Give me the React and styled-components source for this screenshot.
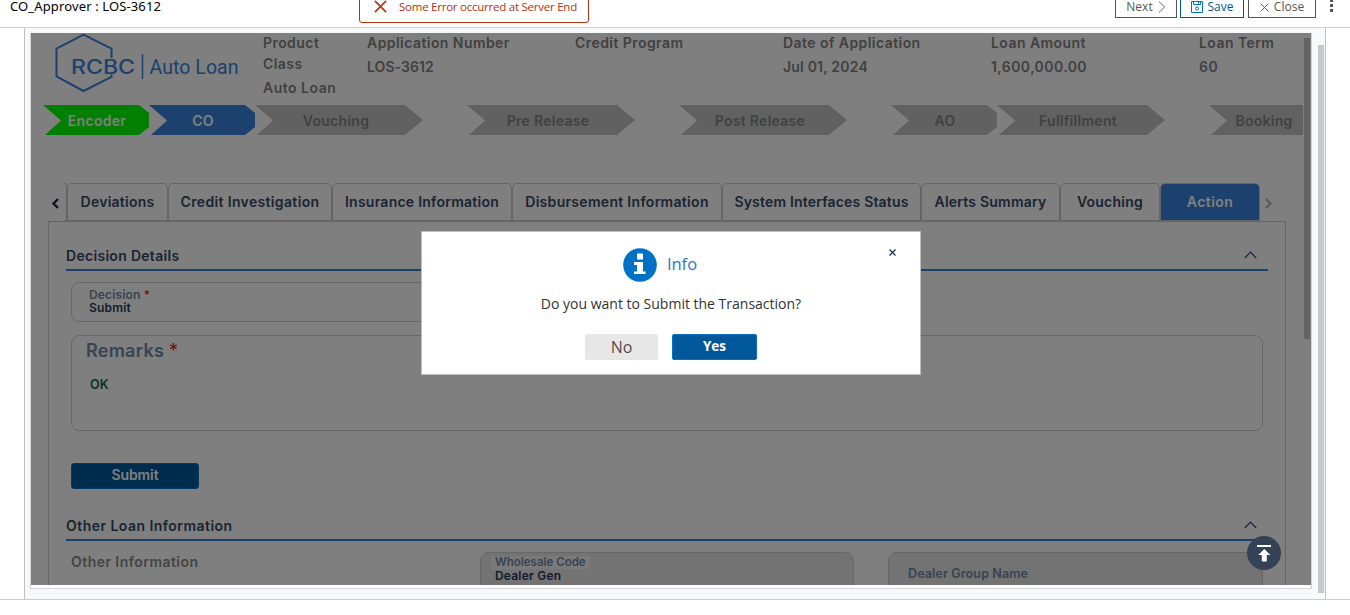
import React from "react";
import styled, { createGlobalStyle } from "styled-components";

const Global = createGlobalStyle`
  *, *::before, *::after { box-sizing: border-box; }
  body { margin: 0; background: #fff; overflow: hidden; font-family: "Open Sans", sans-serif; }
`;
const brand = `font-family: Inter, "Open Sans", sans-serif; font-weight: 600; white-space: nowrap;`;

const Page = styled.div`width: 1350px; height: 615px; overflow: hidden; background: #fff;`;

/* header */
const Header = styled.header`
  height: 28px; display: flex; align-items: flex-start; justify-content: space-between;
  border-bottom: 1px solid #ccced1; overflow: hidden; padding-left: 10px;
`;
const CaseTitle = styled.div`
  width: 349px; font: 13px/18px "Noto Sans", sans-serif; color: #000; margin-top: -3px; letter-spacing: 0.13px;
  white-space: nowrap;
`;
const ErrorToast = styled.div`
  width: 230px; height: 39px; margin-top: -16px; padding: 5px 0 0 14px; display: flex; align-items: center; gap: 12px;
  border: 1px solid #b5310f; border-radius: 3px; color: #b5310f; font-size: 11.5px; letter-spacing: -0.24px;
  white-space: nowrap;
  svg { flex: none; }
`;
const Actions = styled.div`
  margin-left: auto; margin-top: -8px; display: flex; align-items: flex-start;
`;
const HeaderButton = styled.button`
  height: 26px; width: ${(p) => p.$width}px; margin-right: ${(p) => p.$gap}px; padding: 4px 0 0;
  display: flex; align-items: center; justify-content: center; gap: 5px;
  border: 1px solid ${(p) => (p.$primary ? "#00589b" : "#555")}; background: #fff;
  color: ${(p) => (p.$primary ? "#00589b" : "#555")}; font: 12px/18px "Open Sans", sans-serif;
`;
const MoreIcon = styled.svg`margin: 8px 16px 0 0;`;

/* workspace */
const Workspace = styled.main`
  height: 572px; border-bottom: 1px solid #ccc; padding: 0 24px;
`;
const Canvas = styled.div`
  height: 571px; display: flex; background: #f8f9fb; border: solid #bfc0c2; border-width: 0 1px; padding: 5px 1px 0 5px;
`;
const Frame = styled.div`
  width: 1282px; height: 556px; border: 1px solid #d3d5d8; border-top: 0; background: #fff; flex: none;
`;
const OuterScroll = styled.div`width: 6px; height: 548px; margin: 12px 0 0 6px; background: #c8c8c8; flex: none;`;
const Viewport = styled.div`
  position: relative; width: 1280px; height: 552px; overflow: hidden; background: #fff; display: flex;
`;
const Content = styled.div`width: 1272px; flex: none; overflow: hidden;`;
const InnerScroll = styled.div`width: 6px; height: 301px; margin: 5px 0 0 1px; background: #c8c8c8;`;
const Dim = styled.div`position: absolute; inset: 0; background: rgba(0, 0, 0, 0.5);`;

const Summary = styled.section`height: 72px; display: flex;`;
const Logo = styled.svg`margin-left: 22px; flex: none;`;
const Fact = styled.dl`
  ${brand} width: ${(p) => p.$width}px; flex: none; margin: 0; font-size: 14px; line-height: 21px;
  color: #828282; letter-spacing: 0.44px;
  dt { white-space: pre; margin-top: -1px; } dd { margin: 3px 0 0; letter-spacing: ${(p) => p.$ls}px; }
`;

const Stages = styled.nav`display: flex; height: 30px; padding-left: 12px;`;
const clips = {
  wide: "polygon(0 0, 150px 0, 168px 15px, 150px 30px, 2px 30px, 18px 15.5px)",
  narrow: "polygon(0 0, 96px 0, 106px 8px, 106px 22px, 96px 30px, 2px 30px, 18px 15.5px)",
  cut: "polygon(0 0, 108px 0, 108px 30px, 2px 30px, 18px 15.5px)",
};
const Stage = styled.div`
  ${brand} flex: none; height: 30px; line-height: 32px; text-align: center; font-size: 14px;
  width: ${(p) => (p.$shape === "wide" ? 168 : p.$shape === "cut" ? 108 : 106)}px;
  margin-right: ${(p) => (p.$shape === "wide" ? 44 : 0)}px; padding-left: ${(p) => (p.$shape === "wide" ? 0 : 2)}px;
  padding-right: ${(p) => (p.$shape === "wide" ? 6 : 0)}px; letter-spacing: 0.28px;
  clip-path: ${(p) => clips[p.$shape]};
  background: ${(p) => p.$bg || "#c2c2c2"}; color: ${(p) => (p.$bg ? "#fff" : "#828282")};
`;

const TabBar = styled.div`display: flex; height: 38px; margin: 48px 0 0 17px;`;
const TabArrow = styled.svg`flex: none; margin-top: 15px;`;
const TabStub = styled.div`
  width: 3px; margin-left: 4px; border: 1px solid #cacaca; border-left: 0; border-radius: 0 5px 0 0; flex: none;
`;
const Tab = styled.button`
  ${brand} flex: none; height: 38px; width: ${(p) => p.$width}px; padding: 0; font-size: 14px; line-height: 36px;
  letter-spacing: ${(p) => p.$ls || 0}px;
  border: 1px solid #cacaca; border-radius: 5px 5px 0 0;
  background: ${(p) => (p.$active ? "#3983dc" : "#fff")}; color: ${(p) => (p.$active ? "#fff" : "#364864")};
`;
const Panel = styled.section`
  width: 1238px; height: 400px; margin-left: 17px; border: 1px solid #cacaca; padding: 23px 17px 0;
`;
const SectionHead = styled.div`
  ${brand} height: 26px; width: 1202px; border-bottom: 2px solid #3b80d6; display: flex; justify-content: space-between;
  align-items: flex-start; font-size: 14px; line-height: 21px; color: #364864; letter-spacing: ${(p) => p.$ls}px;
  padding-right: 11px;
  svg { margin-top: 6px; }
`;
const Fields = styled.div`padding-left: 5px; width: 1197px;`;
const Field = styled.div`
  ${brand} width: ${(p) => p.$width}px; height: ${(p) => p.$height}px; border: 1px solid #cfcfcf; border-radius: 8px;
  margin-top: ${(p) => p.$top}px; padding: ${(p) => p.$pad}; background: ${(p) => (p.$muted ? "#e6e6e6" : "#fff")};
  font-size: 12px; line-height: 13px; color: #273958; flex: none; letter-spacing: 0.2px;
`;
const FieldLabel = styled.div`
  color: #7387a5; letter-spacing: ${(p) => p.$ls || 0}px; font-size: ${(p) => p.$size || 12}px;
  span { color: #e03020; font-weight: 500; }
`;
const FieldTag = styled(FieldLabel)`
  width: max-content; background: #f4f4f4; padding: 0 4px; margin-left: -4px;
`;
const RemarkText = styled.div`margin-top: 21px; padding-left: 4px; color: #146450; font-size: 12.5px;`;
const SubmitButton = styled.button`
  ${brand} display: block; width: 128px; height: 26px; margin: 32px 0 26px 5px; padding: 0; font-size: 14px;
  line-height: 22px; letter-spacing: -0.1px; color: #fff; background: #00589b; border: 1px solid #0072c6; border-radius: 3px;
  span { display: block; margin-top: -2px; }
`;
const FieldRow = styled.div`display: flex; padding-left: 5px; gap: 34px;`;
const GroupTitle = styled.div`
  ${brand} width: 375px; margin: 10px 0 0; font-size: 14px; line-height: 21px; color: #888; letter-spacing: 0.45px;
`;

/* overlays */
const Dialog = styled.div`
  position: absolute; left: 390px; top: 198px; width: 500px; height: 144px; background: #fff; border: 1px solid #bdbdbd;
  display: flex; flex-direction: column; align-items: center; padding-top: 16px;
`;
const DialogTitle = styled.div`
  display: flex; align-items: center; gap: 10px; height: 34px; margin-right: 22px; color: #2a76c4; font-size: 16.5px;
  span { line-height: 22px; padding-bottom: 2px; }
`;
const DialogClose = styled.svg`position: absolute; right: 24px; top: 17px;`;
const Message = styled.p`margin: 11px 0 0; font-size: 14px; line-height: 22px; color: #333; white-space: nowrap;`;
const Buttons = styled.div`display: flex; gap: 14px; margin-top: 19px;`;
const NoButton = styled.button`
  width: 73px; height: 26px; padding: 0; border: 0; border-radius: 2px; background: #e7e7e7; color: #5a4a48;
  font: 16px/26px "Open Sans", sans-serif;
`;
const YesButton = styled.button`
  width: 85px; height: 26px; padding: 0 0 2px; border: 1px solid #0072c6; border-radius: 2px; background: #00589b;
  color: #fff; font: 700 13.5px/22px "Open Sans", sans-serif;
`;
const ToTop = styled.svg`position: absolute; left: 1216px; top: 503px;`;

const CrossIcon = ({ size, width, color }) => (
  <svg width={size} height={size} viewBox="0 0 14 14" fill="none" stroke={color} strokeWidth={width}>
    <path d="M1 1 13 13M13 1 1 13" />
  </svg>
);
const UpChevron = () => (
  <svg width="13" height="8" viewBox="0 0 13 8" fill="none" stroke="#364864" strokeWidth="1.2">
    <path d="M.8 7 6.5 1.2 12.2 7" />
  </svg>
);

const tabs = [
  ["Deviations", 101, 0.25], ["Credit Investigation", 164, 0.35], ["Insurance Information", 180, 0.25],
  ["Disbursement Information", 210, 0.3], ["System Interfaces Status", 199, 0.18], ["Alerts Summary", 139, 0.22],
  ["Vouching", 100, 0.25], ["Action", 100, 0.45],
];
const stages = [
  ["Encoder", "narrow", "#00ff00"], ["CO", "narrow", "#3983dc"], ["Vouching", "wide"], ["Pre Release", "wide"],
  ["Post Release", "wide"], ["AO", "narrow"], ["Fullfillment", "wide"], ["Booking", "cut"],
];
const facts = [
  ["Product\nClass", "Auto Loan", 104, 0.5], ["Application Number", "LOS-3612", 208, 0.05], ["Credit Program", "", 208, 0],
  ["Date of Application", "Jul 01, 2024", 208, 0.2], ["Loan Amount", "1,600,000.00", 208, 0.42],
  ["Loan Term", "60", 90, 0.6],
];

export default function App() {
  return (
    <Page>
      <Global />
      <Header>
        <CaseTitle>CO_Approver : LOS-3612</CaseTitle>
        <ErrorToast>
          <CrossIcon size={13} width={2} color="#c23a12" />
          Some Error occurred at Server End
        </ErrorToast>
        <Actions>
          <HeaderButton $width={62} $gap={3}>
            Next
            <svg width="8" height="12" viewBox="0 0 8 12" fill="none" stroke="#666"><path d="M1 .5 6.700 6 1 11.500" /></svg>
          </HeaderButton>
          <HeaderButton $width={64} $gap={4} $primary>
            <svg width="12" height="12" viewBox="0 0 12 12" fill="none" stroke="#0072c6">
              <path d="M.5.5h11v11H.5zM2.5.5v3h7v-3M7.5.5v2" /><circle cx="6" cy="7.5" r="1.5" />
            </svg>
            Save
          </HeaderButton>
          <HeaderButton $width={68} $gap={13}>
            <CrossIcon size={9} width={1.5} color="#555" />
            Close
          </HeaderButton>
          <MoreIcon width="5" height="14" viewBox="0 0 5 14" fill="#555">
            <path d="M1 0h3v2H1zM1 4h3v3H1zM1 9h3v3H1z" />
          </MoreIcon>
        </Actions>
      </Header>
      <Workspace>
        <Canvas>
          <Frame>
            <Viewport>
              <Content>
                <Summary>
                  <Logo width="210" height="62" viewBox="53 33 210 62" fill="none" stroke="#3983dc">
                    <path strokeWidth="2" d="M111.500 58V48.500L83.500 34.500 56.500 48.500V76.500L83.500 91 111.500 77V74.500" />
                    <path strokeWidth="1.500" d="M142.500 54V79" />
                    <g fill="#3983dc" stroke="none">
                      <text x="71" y="73.500" fontFamily="Inter" fontWeight="500" fontSize="19.500" textLength="64" lengthAdjust="spacingAndGlyphs">RCBC</text>
                      <text x="149.500" y="73.500" fontFamily="Roboto" fontSize="19.500" textLength="89">Auto Loan</text>
                    </g>
                  </Logo>
                  {facts.map(([label, value, width, ls]) => (
                    <Fact key={label} $width={width} $ls={ls}>
                      <dt>{label}</dt><dd>{value}</dd>
                    </Fact>
                  ))}
                </Summary>
                <Stages>
                  {stages.map(([name, shape, bg]) => <Stage key={name} $shape={shape} $bg={bg}>{name}</Stage>)}
                </Stages>
                <TabBar>
                  <TabArrow width="12" height="12" viewBox="0 0 12 12" fill="none" stroke="#202a38" strokeWidth="2.400">
                    <path d="M10 1 5.500 5.500l4.500 4.500" />
                  </TabArrow>
                  <TabStub />
                  {tabs.map(([name, width, ls]) => (
                    <Tab key={name} $width={width} $ls={ls} $active={name === "Action"}>{name}</Tab>
                  ))}
                  <TabArrow width="14" height="12" viewBox="0 0 14 12" fill="none" stroke="#b5b9c2" strokeWidth="2.400">
                    <path d="M6 1l4.500 4.500L6 10" />
                  </TabArrow>
                </TabBar>
                <Panel>
                  <SectionHead $ls={0.3}>Decision Details<UpChevron /></SectionHead>
                  <Fields>
                    <Field $width={374} $height={40} $top={11} $pad="5px 17px">
                      <FieldLabel $ls={0.15}>Decision <span>*</span></FieldLabel>
                      Submit
                    </Field>
                    <Field $width={1192} $height={96} $top={13} $pad="8px 14px">
                      <FieldLabel $size={18} $ls={0.25}>Remarks <span>*</span></FieldLabel>
                      <RemarkText>OK</RemarkText>
                    </Field>
                  </Fields>
                  <SubmitButton><span>Submit</span></SubmitButton>
                  <SectionHead $ls={0.46}>Other Loan Information<UpChevron /></SectionHead>
                  <FieldRow>
                    <GroupTitle>Other Information</GroupTitle>
                    <Field $muted $width={374} $height={60} $top={11} $pad="3px 14px">
                      <FieldTag $size={11.5}>Wholesale Code</FieldTag>
                      Dealer Gen
                    </Field>
                    <Field $muted $width={375} $height={60} $top={11} $pad="14px 19px">
                      <FieldLabel $size={12.5} $ls={0.12}>Dealer Group Name</FieldLabel>
                    </Field>
                  </FieldRow>
                </Panel>
              </Content>
              <InnerScroll />
              <Dim />
              <Dialog>
                <DialogTitle>
                  <svg width="34" height="34" viewBox="0 0 34 34">
                    <circle cx="17" cy="17" r="16.800" fill="#0072c6" />
                    <path fill="#fff" d="M14 5.500h6v6h-6zM11 14h9v9.500h2.500V26H11v-2.500h3V17h-3z" />
                  </svg>
                  <span>Info</span>
                </DialogTitle>
                <DialogClose width="7" height="7" viewBox="0 0 7 7" stroke="#1b2a55" strokeWidth="1.200">
                  <path d="M.5.5 6.500 6.500M6.500.5.5 6.500" />
                </DialogClose>
                <Message>Do you want to Submit the Transaction?</Message>
                <Buttons>
                  <NoButton>No</NoButton>
                  <YesButton>Yes</YesButton>
                </Buttons>
              </Dialog>
              <ToTop width="34" height="34" viewBox="0 0 34 34">
                <circle cx="17" cy="17" r="17" fill="#344256" />
                <path fill="#fff" d="M10 9h14v2H10zM17.300 13l6 6h-3.500v6.500h-5V19h-3.500z" />
              </ToTop>
            </Viewport>
          </Frame>
          <OuterScroll />
        </Canvas>
      </Workspace>
    </Page>
  );
}
